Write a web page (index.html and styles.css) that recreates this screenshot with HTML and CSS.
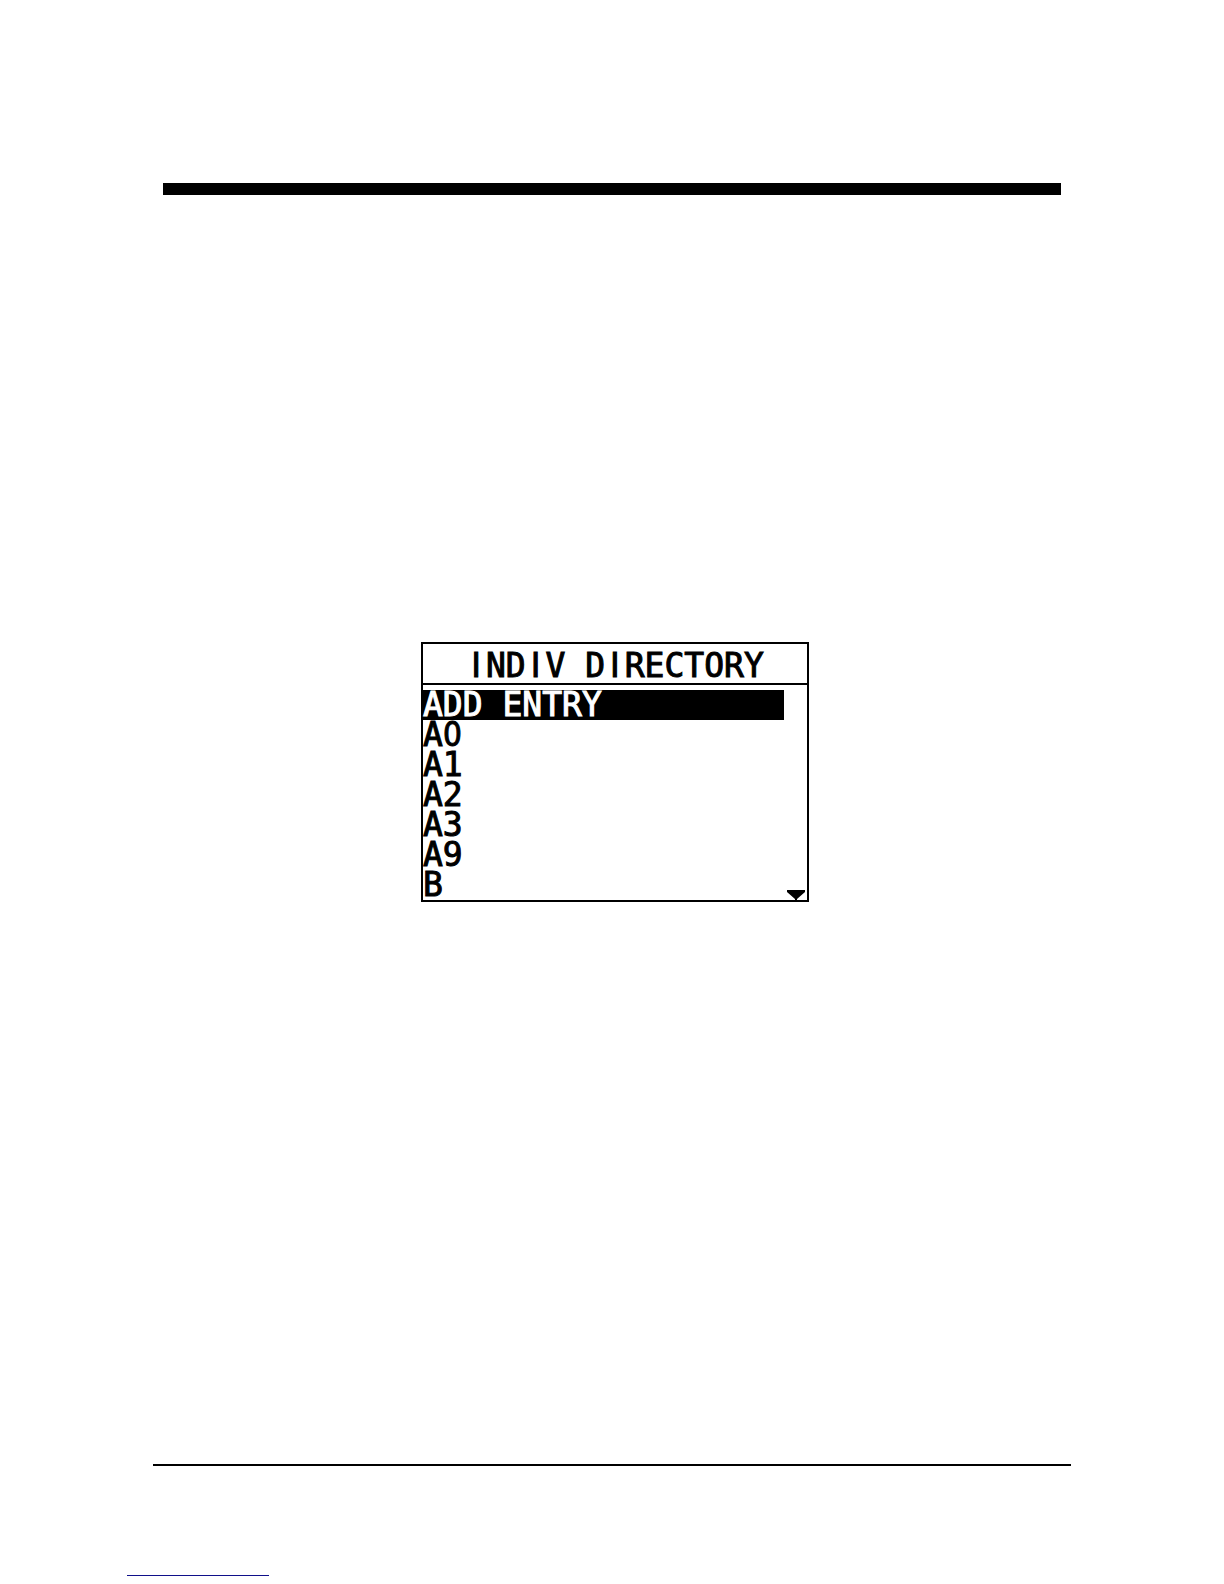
FILE: index.html
```html
<!DOCTYPE html>
<html lang="en">
<head>
<meta charset="utf-8">
<title>INDIV DIRECTORY</title>
<link rel="stylesheet" href="styles.css">
</head>
<body>
<div class="page">
  <header class="page-head"></header>
  <main class="page-body">
    <section class="screen" aria-labelledby="screen-title">
      <h1 class="screen-title" id="screen-title"><span class="bar-i">I</span>ND<span class="bar-i">I</span>V D<span class="bar-i">I</span>RECTORY</h1>
      <ul class="menu">
        <li><button class="entry selected" type="button">ADD ENTRY</button></li>
        <li><button class="entry" type="button">A<span class="zero">0</span></button></li>
        <li><button class="entry" type="button">A1</button></li>
        <li><button class="entry" type="button">A2</button></li>
        <li><button class="entry" type="button">A3</button></li>
        <li><button class="entry" type="button">A9</button></li>
        <li><button class="entry" type="button">B</button></li>
      </ul>
      <button class="scroll-down" type="button" aria-label="Scroll down">
        <svg width="18" height="12" viewBox="0 0 18 12" aria-hidden="true"><path d="M0 0H18V2L10 9V12H8V9L0 2Z"/></svg>
      </button>
    </section>
  </main>
  <footer class="page-foot"><div class="foot-link"></div></footer>
</div>
</body>
</html>
```
FILE: styles.css
```css
* {
  box-sizing: border-box;
}

body {
  margin: 0;
  background: #fff;
  color: #000;
  font-family: "DejaVu Sans Mono", monospace;
}

.page {
  display: flex;
  flex-direction: column;
  min-height: 100vh;
  padding-top: 183px;
}

.page-head {
  height: 12px;
  margin: 0 163px;
  background: #000;
}

.page-body {
  flex: 1;
  display: flex;
  justify-content: center;
  align-items: flex-start;
  padding: 447px 0 60px 6px;
}

.screen {
  position: relative;
  width: 100%;
  max-width: 388px;
  border: 2px solid #000;
  font-size: 33px;
  font-weight: 400;
  -webkit-text-stroke: 1px currentColor;
}

.screen-title {
  margin: 0;
  padding-top: 5px;
  border-bottom: 2px solid #000;
  font-size: 33px;
  font-weight: 400;
  line-height: 34px;
  text-align: center;
  white-space: nowrap;
}

.bar-i {
  padding: 0 5px;
  font-family: "DejaVu Sans", sans-serif;
}

.zero {
  font-family: "DejaVu Sans Condensed", "DejaVu Sans", sans-serif;
  font-stretch: condensed;
}

.menu {
  margin: 0;
  padding: 5px 23px 0 0;
  list-style: none;
}

.menu li {
  height: 30px;
}

.entry {
  display: block;
  width: 100%;
  height: 30px;
  margin: 0;
  padding: 0;
  border: 0;
  background: none;
  color: #000;
  font: inherit;
  line-height: 30px;
  text-align: left;
}

.entry.selected {
  background: #000;
  color: #fff;
}

.scroll-down {
  position: absolute;
  right: 2px;
  bottom: -2px;
  padding: 0;
  border: 0;
  background: none;
}

.scroll-down svg {
  display: block;
}

.page-foot {
  margin: 0 153px;
  height: 120px;
  padding-top: 109px;
  border-top: 2px solid #000;
}

.foot-link {
  width: 142px;
  height: 1px;
  margin-left: -26px;
  background: #10108a;
}
```
